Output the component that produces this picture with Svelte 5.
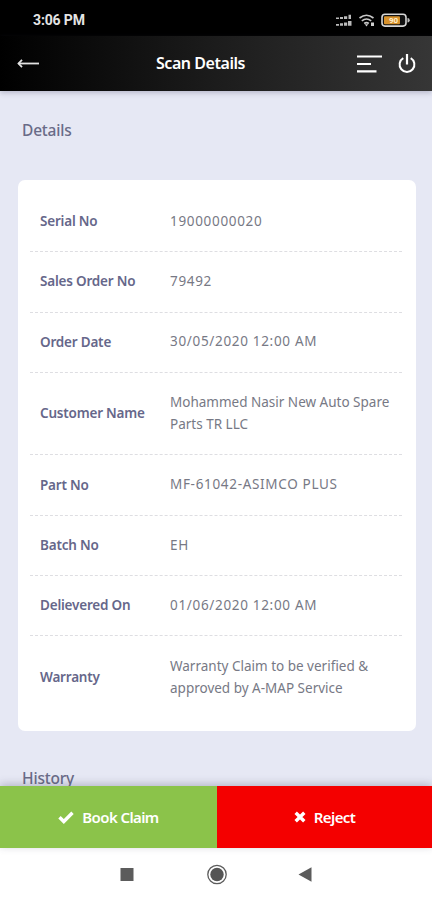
<script lang="ts">
  type Row = { label: string; value: string; tall?: boolean };

  const rows: Row[] = [
    { label: "Serial No", value: "19000000020" },
    { label: "Sales Order No", value: "79492" },
    { label: "Order Date", value: "30/05/2020 12:00 AM" },
    { label: "Customer Name", value: "Mohammed Nasir New Auto Spare Parts TR LLC", tall: true },
    { label: "Part No", value: "MF-61042-ASIMCO PLUS" },
    { label: "Batch No", value: "EH" },
    { label: "Delievered On", value: "01/06/2020 12:00 AM" },
    { label: "Warranty", value: "Warranty Claim to be verified & approved by A-MAP Service", tall: true },
  ];
</script>

<div class="screen">
  <div class="status">
    <span class="time">3:06 PM</span>
    <svg class="status-icons" width="76" height="18" viewBox="0 0 76 18">
      <g fill="#bbb">
        <path d="M1 6.500h3v1.500H1zM5 6h3v2H5zM9 5.200h3.200V8H9zM13.500 3.800H16V8h-2.500zM1 13h3v1.800H1zM5 12.300h3v2.500H5zM9 11.500h3.200v3.300H9zM13 10h3.500v4.800H13z" />
      </g>
      <g fill="none" stroke="#c8c8c8" stroke-width="1.600">
        <path d="M24.500 7q7-5.500 14 0M26.800 9.900q4.700-3.800 9.400 0M29.200 12.500q2.300-1.800 4.600 0" />
      </g>
      <path d="M29.800 13.300h3.400L31.500 15.500zM36 11.500h3v3.500h-3z" fill="#d0d0d0" />
      <rect x="47" y="3.300" width="24" height="11.800" rx="3" fill="#111" stroke="#d6d6d6" stroke-width="1.600" />
      <rect x="49" y="5.200" width="16" height="8" rx="1" fill="#d8922c" />
      <path d="M72.500 7q2.200 0 2.200 2.200t-2.200 2.200z" fill="#bbb" />
      <text x="54" y="12.200" class="battery">90</text>
    </svg>
  </div>

  <header>
    <svg class="back" width="24" height="12" viewBox="0 0 24 12" fill="none" stroke="#e2e2e2">
      <path d="M1.500 5.500H22" stroke-width="1.800" />
      <path d="M5 1.800L1.500 5.500l3.500 3.700" stroke-width="1.800" />
    </svg>
    <h1>Scan Details</h1>
    <svg class="tools" width="62" height="24" viewBox="0 0 62 24" fill="none" stroke="#fff">
      <path d="M1 4.500h25M1 12h14M1 19.300h19.500" stroke-width="2.200" />
      <path d="M47.300 6.100a7.400 7.400 0 1 0 7.400 0" stroke-width="2" />
      <path d="M51 2v10.500" stroke-width="2.200" />
    </svg>
  </header>

  <main>
    <h2>Details</h2>
    <dl>
      {#each rows as row}
        <div class="row" class:tall={row.tall}>
          <dt>{row.label}</dt>
          <dd>{row.value}</dd>
        </div>
      {/each}
    </dl>
    <h2 class="history">History</h2>
  </main>

  <div class="actions">
    <button class="book">
      <svg width="16" height="14" viewBox="0 0 16 14"><path d="M1.500 7.200l4.300 4.300L14.500 2.800" fill="none" stroke="#fff" stroke-width="3.400" /></svg>
      <span>Book Claim</span>
    </button>
    <button class="reject">
      <svg width="12" height="12" viewBox="0 0 12 12"><path d="M1.700 1.700l8.600 8.600M10.300 1.700l-8.600 8.600" fill="none" stroke="#fff" stroke-width="3.400" /></svg>
      <span>Reject</span>
    </button>
  </div>

  <nav>
    <svg width="432" height="52" viewBox="0 0 432 52">
      <rect x="120.500" y="20" width="13" height="13" fill="#5c5c5c" />
      <circle cx="217" cy="26.500" r="9.200" fill="none" stroke="#5c5c5c" stroke-width="1.300" />
      <circle cx="217" cy="26.500" r="6.700" fill="#555" />
      <path d="M298.500 26.500l13-7.200v14.400z" fill="#5c5c5c" />
    </svg>
  </nav>
</div>

<style>
  :global(body) {
    margin: 0;
    overflow: hidden;
  }
  .screen {
    width: 432px;
    height: 900px;
    display: flex;
    flex-direction: column;
    overflow: hidden;
    background: #fff;
    font-family: "Noto Sans", sans-serif;
  }
  .status {
    height: 36px;
    flex: none;
    box-sizing: border-box;
    padding: 3px 21px 0 33px;
    display: flex;
    align-items: center;
    justify-content: space-between;
    background: #000;
    color: #e4e4e4;
  }
  .time {
    font: 700 14px/18px Roboto, sans-serif;
    letter-spacing: -0.15px;
  }
  .battery {
    font: 700 8px Roboto, sans-serif;
    fill: #fff0d0;
  }
  header {
    height: 55px;
    flex: none;
    display: grid;
    grid-template-columns: 76px 1fr 76px;
    align-items: center;
    background: linear-gradient(90deg, #000, #1c1c1c 50%, #363636);
    box-shadow: 0 2px 5px rgba(70, 70, 100, 0.28);
    position: relative;
  }
  .back {
    margin-left: 17px;
  }
  h1 {
    margin: 0;
    text-align: center;
    font-size: 16px;
    font-weight: 600;
    line-height: 24px;
    letter-spacing: -0.45px;
    color: #fff;
    padding: 0 31px 1px 0;
  }
  main {
    flex: 1;
    min-height: 0;
    background: #e6e8f4;
    padding: 27px 16px 0 18px;
  }
  h2 {
    margin: 0 0 0 4px;
    font-size: 15.5px;
    line-height: 24px;
    font-weight: 500;
    color: #696b87;
    letter-spacing: -0.2px;
  }
  dl {
    margin: 38px 0 0;
    padding: 12px 14px 12px 12px;
    height: 527px;
    border-radius: 7px;
    background: #fff;
  }
  .row {
    display: grid;
    grid-template-columns: 130px 1fr;
    align-items: center;
    height: 60.3px;
    box-sizing: border-box;
    padding: 0 0 1px 10px;
    border-bottom: 1px dashed #dedee2;
  }
  .tall {
    height: 82.6px;
  }
  .row:last-child {
    border-bottom: 0;
  }
  dt {
    font-size: 13.5px;
    font-weight: 600;
    letter-spacing: -0.2px;
    color: #66678a;
    white-space: nowrap;
  }
  dd {
    margin: 0;
    font-size: 13.5px;
    line-height: 22.5px;
    letter-spacing: 0.68px;
    color: #777985;
  }
  .tall dd {
    letter-spacing: 0;
  }
  .history {
    margin-top: 35px;
  }
  .actions {
    height: 62px;
    flex: none;
    display: grid;
    grid-template-columns: 217px 1fr;
    box-shadow: 0 -2px 8px rgba(70, 70, 100, 0.3);
    position: relative;
  }
  button {
    border: 0;
    padding: 0 0 1px;
    display: flex;
    align-items: center;
    justify-content: center;
    gap: 8px;
    color: #fff;
    font: 600 15px/24px "Noto Sans", sans-serif;
    letter-spacing: -0.6px;
  }
  .book {
    background: #8bc34a;
  }
  .reject {
    background: #f40000;
  }
  nav {
    height: 52px;
    flex: none;
    background: #fff;
  }
</style>
